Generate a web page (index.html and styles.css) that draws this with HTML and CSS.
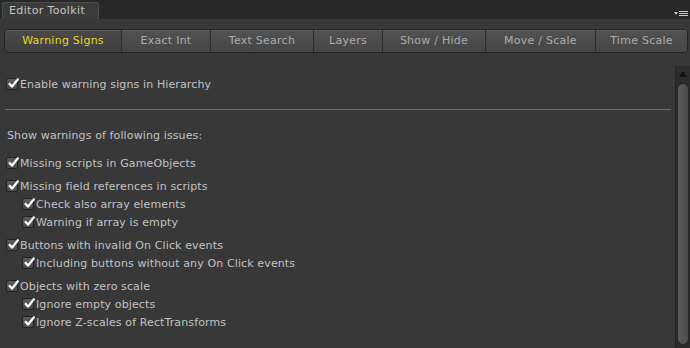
FILE: index.html
```html
<!DOCTYPE html>
<html>
<head>
<meta charset="utf-8">
<link rel="stylesheet" href="styles.css">
</head>
<body>
<div class="app">
  <div class="tabbar">
    <div class="tab">Editor Toolkit</div>
    <div class="menu">
      <svg width="14" height="6" viewBox="0 0 14 6"><polygon points="0,1 4,1 2,4" fill="#c8c8c8"/><rect x="5" y="0" width="9" height="1" fill="#c8c8c8"/><rect x="5" y="2" width="9" height="1" fill="#c8c8c8"/><rect x="5" y="4" width="9" height="1" fill="#c8c8c8"/></svg>
    </div>
  </div>
  <div class="window">
    <div class="toolbar">
      <div class="tbtn active">Warning Signs</div>
      <div class="tbtn">Exact Int</div>
      <div class="tbtn">Text Search</div>
      <div class="tbtn">Layers</div>
      <div class="tbtn">Show / Hide</div>
      <div class="tbtn">Move / Scale</div>
      <div class="tbtn">Time Scale</div>
    </div>
    <div class="body">
      <div class="content">
        <div class="row"><span class="cb"></span>Enable warning signs in Hierarchy</div>
        <div class="divider"></div>
        <div class="row plain">Show warnings of following issues:</div>
        <div class="group first">
          <div class="row"><span class="cb"></span>Missing scripts in GameObjects</div>
        </div>
        <div class="group">
          <div class="row"><span class="cb"></span>Missing field references in scripts</div>
          <div class="row sub"><span class="cb"></span>Check also array elements</div>
          <div class="row sub"><span class="cb"></span>Warning if array is empty</div>
        </div>
        <div class="group">
          <div class="row"><span class="cb"></span>Buttons with invalid On Click events</div>
          <div class="row sub"><span class="cb"></span>Including buttons without any On Click events</div>
        </div>
        <div class="group">
          <div class="row"><span class="cb"></span>Objects with zero scale</div>
          <div class="row sub"><span class="cb"></span>Ignore empty objects</div>
          <div class="row sub"><span class="cb"></span>Ignore Z-scales of RectTransforms</div>
        </div>
      </div>
      <div class="scrollbar">
        <div class="arrow"></div>
        <div class="thumb"></div>
      </div>
    </div>
  </div>
</div>
</body>
</html>
```
FILE: styles.css
```css
html, body {
  margin: 0;
  padding: 0;
  background: #383838;
}
body {
  width: 690px;
  height: 348px;
  overflow: hidden;
  font-family: "DejaVu Sans", Verdana, sans-serif;
  font-size: 11px;
  color: #c2c2c2;
}
.app {
  display: flex;
  flex-direction: column;
  height: 348px;
}
.tabbar {
  height: 19px;
  background: #282828;
  display: flex;
  align-items: flex-end;
  padding-left: 2px;
  box-sizing: border-box;
  position: relative;
}
.tab {
  width: 97px;
  height: 17px;
  box-sizing: border-box;
  background: #3b3b3b;
  border: 1px solid #4c4c4c;
  border-bottom: none;
  border-radius: 3px 3px 0 0;
  color: #c4c4c4;
  padding-left: 6px;
  line-height: 16px;
  letter-spacing: 0.35px;
}
.menu {
  margin-left: auto;
  margin-right: 2px;
  margin-bottom: 2px;
  height: 6px;
  display: flex;
}
.menu svg { display: block; }
.window {
  flex: 1;
  display: flex;
  flex-direction: column;
  min-height: 0;
}
.toolbar {
  margin: 10px 2px 0 4px;
  height: 24px;
  display: grid;
  grid-template-columns: 116px 89px 103px 69px 103px 110px 1fr;
  border: 1px solid #242424;
  border-radius: 4px;
  overflow: hidden;
  box-sizing: border-box;
}
.tbtn {
  background: linear-gradient(#525252, #454545);
  border-left: 1px solid #2c2c2c;
  box-shadow: inset 0 1px 0 #5c5c5c;
  color: #ababab;
  text-align: center;
  line-height: 22px;
  letter-spacing: 0.25px;
}
.tbtn:first-child { border-left: none; }
.tbtn.active {
  background: linear-gradient(#4a4a4a, #3f3f3f);
  color: #e2da22;
}
.body {
  flex: 1;
  display: flex;
  margin-top: 13px;
  min-height: 0;
}
.content {
  flex: 1;
  padding: 9px 4px 0 6px;
}
.row {
  height: 18px;
  display: flex;
  align-items: center;
  white-space: nowrap;
  letter-spacing: 0.12px;
}
.row.plain { padding-left: 1px; }
.row.sub { padding-left: 16px; }
.divider {
  height: 1px;
  background: #6b6b6b;
  margin: 16px 0 16px -1px;
}
.group { margin-top: 5px; }
.group.first { margin-top: 10px; }
.cb {
  width: 12px;
  height: 12px;
  box-sizing: border-box;
  border: 1px solid #222;
  border-radius: 2px;
  background: linear-gradient(#5a5a5a, #4a4a4a);
  margin-right: 2px;
  position: relative;
  flex: none;
}
.cb::after {
  content: "";
  position: absolute;
  left: 1px;
  top: -1px;
  width: 11px;
  height: 10px;
  background: no-repeat center/contain url("data:image/svg+xml;utf8,<svg xmlns='http://www.w3.org/2000/svg' viewBox='0 0 11 10'><path d='M1 5.2 L4 8.6 L10.4 0.6' fill='none' stroke='white' stroke-width='2.3' stroke-linejoin='round'/></svg>");
}
.scrollbar {
  width: 15px;
  background: #2c2c2c;
  border-left: 1px solid #232323;
  box-sizing: border-box;
  display: flex;
  flex-direction: column;
  align-items: center;
}
.arrow {
  margin-top: 5px;
  width: 0;
  height: 0;
  border-left: 4px solid transparent;
  border-right: 4px solid transparent;
  border-bottom: 6px solid #111;
}
.thumb {
  margin-top: 6px;
  width: 12px;
  flex: 1;
  margin-bottom: 3px;
  border-radius: 6px;
  background: linear-gradient(90deg, #5a5a5a, #4b4b4b);
  border: 1px solid #242424;
  box-sizing: border-box;
}
```
